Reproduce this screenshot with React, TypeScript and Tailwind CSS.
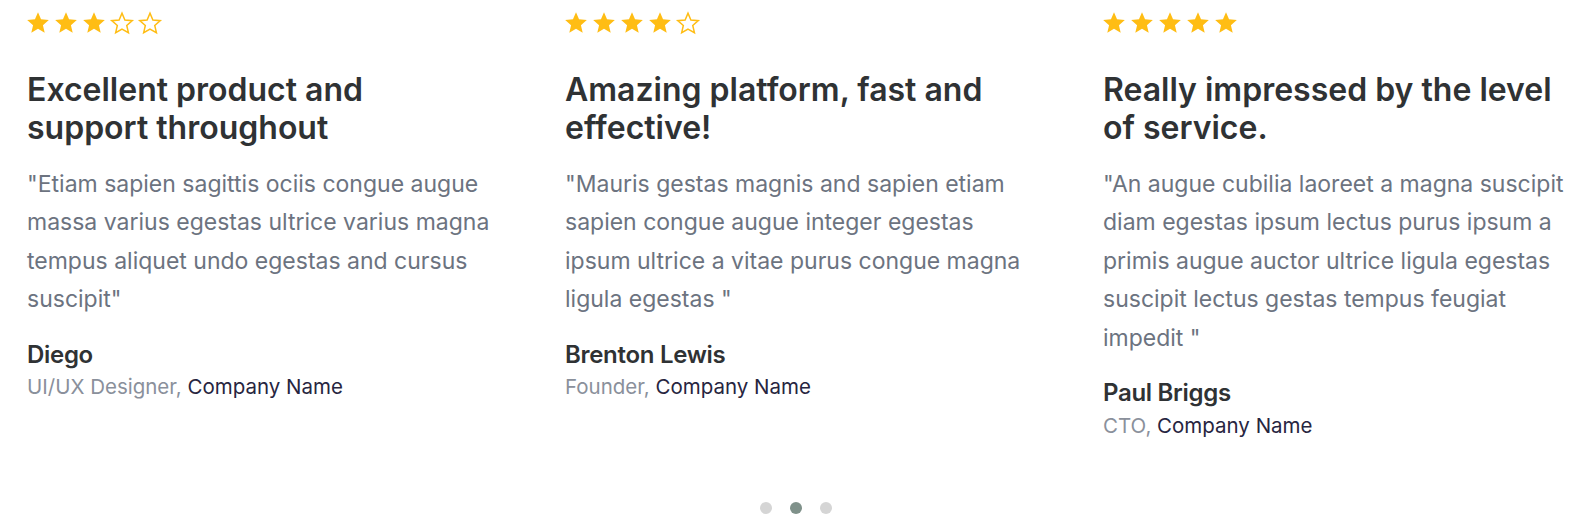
import { useState } from 'react';

interface Review {
  rating: number;
  title: string;
  text: string;
  name: string;
  role: string;
}

const reviews: Review[] = [
  {
    rating: 3,
    title: 'Excellent product and support throughout',
    text: '"Etiam sapien sagittis ociis congue augue massa varius egestas ultrice varius magna tempus aliquet undo egestas and cursus suscipit"',
    name: 'Diego',
    role: 'UI/UX Designer',
  },
  {
    rating: 4,
    title: 'Amazing platform, fast and effective!',
    text: '"Mauris gestas magnis and sapien etiam sapien congue augue integer egestas ipsum ultrice a vitae purus congue magna ligula egestas "',
    name: 'Brenton Lewis',
    role: 'Founder',
  },
  {
    rating: 5,
    title: 'Really impressed by the level of service.',
    text: '"An augue cubilia laoreet a magna suscipit diam egestas ipsum lectus purus ipsum a primis augue auctor ultrice ligula egestas suscipit lectus gestas tempus feugiat impedit "',
    name: 'Paul Briggs',
    role: 'CTO',
  },
];

function Star({ filled }: { filled: boolean }) {
  return (
    <svg width="26" height="26" viewBox="0 0 24 24" className="shrink-0">
      <path
        d={
          filled
            ? 'M12 17.27L18.18 21l-1.64-7.03L22 9.24l-7.19-.61L12 2 9.19 8.63 2 9.24l5.46 4.73L5.82 21z'
            : 'M12 17.9L18.9 21.8l-1.8-7.8L23 8.9l-7.9-.7L12 .9 8.9 8.2 1 8.9l6 5.1-1.8 7.8z'
        }
        transform={filled ? undefined : 'translate(12 12) scale(0.86) translate(-12 -11.4)'}
        fill={filled ? '#ffbd14' : 'none'}
        stroke="#ffbd14"
        strokeWidth={filled ? 0 : 1.6}
        strokeLinejoin="miter"
      />
    </svg>
  );
}

function ReviewCard({ review }: { review: Review }) {
  return (
    <div className="w-[538px] shrink-0 pr-[72px]">
      <div className="flex gap-[2px] -ml-[2.5px]">
        {[1, 2, 3, 4, 5].map((i) => (
          <Star key={i} filled={i <= review.rating} />
        ))}
      </div>
      <h3 className="mt-[35px] max-w-[456px] text-[32px] leading-[38px] font-semibold text-[#2f3234]">
        {review.title}
      </h3>
      <p className="mt-[17.5px] text-[23px] leading-[38.5px] text-[#6c7380]">{review.text}</p>
      <p className="mt-[22px] text-[24px] leading-[28px] font-semibold tracking-[-0.3px] text-[#2f3234]">
        {review.name}
      </p>
      <p className="mt-[4.5px] text-[20.5px] leading-[28px] text-[#8a909b]">
        {review.role}, <span className="text-[#27253f]">Company Name</span>
      </p>
    </div>
  );
}

export default function App() {
  const [active, setActive] = useState(1);

  return (
    <div className="w-[1574px] h-[525px] overflow-hidden bg-white font-['Inter',sans-serif]">
      <div className="flex pl-[27px] pt-[10px]">
        {reviews.map((r) => (
          <ReviewCard key={r.name} review={r} />
        ))}
      </div>
      <div className="flex justify-center gap-[18px] mt-[62px] pl-[18px]">
        {[0, 1, 2].map((i) => (
          <button
            key={i}
            onClick={() => setActive(i)}
            className={`w-[12px] h-[12px] rounded-full ${i === active ? 'bg-[#7f918a]' : 'bg-[#d5d5d5]'}`}
          />
        ))}
      </div>
    </div>
  );
}
